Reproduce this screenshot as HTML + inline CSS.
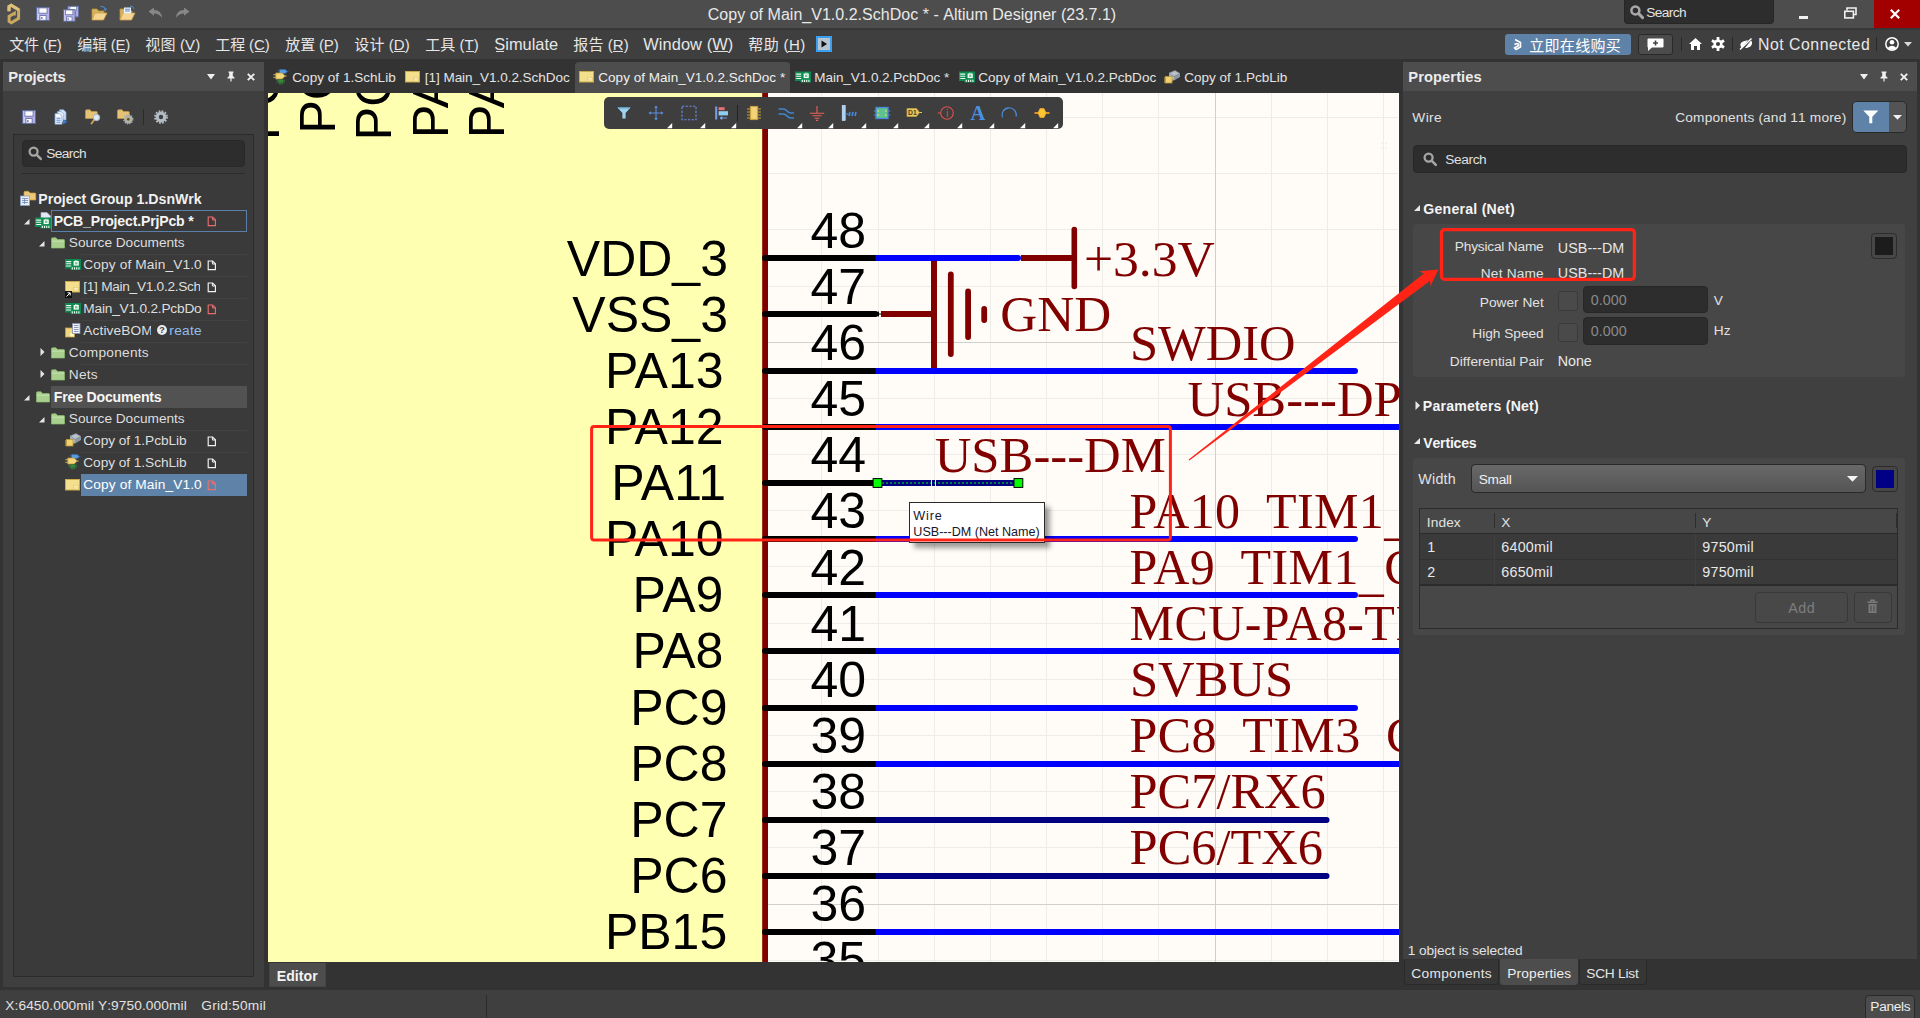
<!DOCTYPE html>
<html lang="zh-CN">
<head>
<meta charset="utf-8">
<title>Copy of Main_V1.0.2.SchDoc * - Altium Designer (23.7.1)</title>
<style>
html,body{margin:0;padding:0;background:#333;}
body{width:1920px;height:1018px;overflow:hidden;position:relative;
 font-family:"Liberation Sans","Noto Sans CJK SC",sans-serif;color:#dedede;font-size:13px;}
div,span.t,svg.i{position:absolute;box-sizing:border-box;}
span.t{white-space:nowrap;line-height:1;font-kerning:none;}
svg.i{overflow:visible;}
svg text{font-kerning:none;}
</style>
</head>
<body>
<div class="root" style="left:0px;top:0px;width:1920px;height:1018px;background:#333;overflow:hidden;">
<div class="titlebar" style="left:0px;top:0px;width:1920px;height:28px;background:#4d4d4d;">
<svg class="i" style="left:6px;top:3px;" width="16" height="22" viewBox="0 0 16 22"><path d="M3 8.2 V3.6 L5.2 2.3 L12.6 6.7 V15.3 L5.4 19.7 L3.1 18.3 V13.4 L8.3 10.3 V12.6" fill="none" stroke="#c9a85f" stroke-width="3" stroke-linejoin="miter"/><path d="M3 8.2 V3.6 L5.2 2.3 L12.6 6.7" fill="none" stroke="#dcc07c" stroke-width="3"/></svg>
<svg class="i" style="left:36px;top:7px;" width="14" height="14" viewBox="0 0 14 14"><g transform="translate(0,0) scale(1.0)"><rect x="0.5" y="0.5" width="13" height="13" fill="#b6b0ea" stroke="#5c6a9c" stroke-width="1"/><rect x="1.6" y="1" width="1.2" height="12" fill="#d8d4f6"/><rect x="2.9" y="0.9" width="8.2" height="5.3" fill="#fbfbfd" stroke="#5c6a9c" stroke-width="0.8"/><rect x="3.9" y="8.6" width="6.2" height="4.6" fill="#fbfbfd" stroke="#5c6a9c" stroke-width="0.8"/><rect x="5" y="10" width="1.6" height="2" fill="#8088b8"/></g></svg>
<svg class="i" style="left:63px;top:5px;" width="17" height="17" viewBox="0 0 17 17"><g transform="translate(4.5,0.8) scale(0.8214285714285714)"><rect x="0.5" y="0.5" width="13" height="13" fill="#b6b0ea" stroke="#5c6a9c" stroke-width="1"/><rect x="1.6" y="1" width="1.2" height="12" fill="#d8d4f6"/><rect x="2.9" y="0.9" width="8.2" height="5.3" fill="#fbfbfd" stroke="#5c6a9c" stroke-width="0.8"/><rect x="3.9" y="8.6" width="6.2" height="4.6" fill="#fbfbfd" stroke="#5c6a9c" stroke-width="0.8"/><rect x="5" y="10" width="1.6" height="2" fill="#8088b8"/></g><g transform="translate(0,4.2) scale(0.8928571428571429)"><rect x="0.5" y="0.5" width="13" height="13" fill="#b6b0ea" stroke="#5c6a9c" stroke-width="1"/><rect x="1.6" y="1" width="1.2" height="12" fill="#d8d4f6"/><rect x="2.9" y="0.9" width="8.2" height="5.3" fill="#fbfbfd" stroke="#5c6a9c" stroke-width="0.8"/><rect x="3.9" y="8.6" width="6.2" height="4.6" fill="#fbfbfd" stroke="#5c6a9c" stroke-width="0.8"/><rect x="5" y="10" width="1.6" height="2" fill="#8088b8"/></g></svg>
<svg class="i" style="left:91px;top:5px;" width="17" height="17" viewBox="0 0 17 17"><path d="M1 15 L1 4 L6 4 L7.5 6 L13 6 L13 8" fill="#d9b25e" stroke="#b8923e" stroke-width="0.8"/><path d="M1 15 L4 8 L16 8 L12.5 15 Z" fill="#f6d592" stroke="#c9a04a" stroke-width="0.8"/><path d="M9.5 1.5 Q13.5 1 14.5 5" fill="none" stroke="#4a8fd0" stroke-width="1.1"/><path d="M12.8 4 L14.6 6.2 L16 3.6 Z" fill="#4a8fd0"/></svg>
<svg class="i" style="left:119px;top:5px;" width="17" height="17" viewBox="0 0 17 17"><path d="M1 15 L1 4 L6 4 L7.5 6 L13 6 L13 8" fill="#d9b25e" stroke="#b8923e" stroke-width="0.8"/><path d="M1 15 L4 8 L16 8 L12.5 15 Z" fill="#f6d592" stroke="#c9a04a" stroke-width="0.8"/><rect x="5" y="2.5" width="7" height="6" fill="#f2f6fb"/><path d="M6 4.2h5M6 6h5" stroke="#5b8fd0" stroke-width="1"/><path d="M11 1 Q14.5 1 15 4" fill="none" stroke="#4a8fd0" stroke-width="1"/></svg>
<svg class="i" style="left:148px;top:7px;" width="15" height="12" viewBox="0 0 15 12"><path d="M0.5 4.5 L6 0.5 L6 3 Q13.5 3 14 11 Q11.5 6.5 6 6.5 L6 8.8 Z" fill="#878787"/></svg>
<svg class="i" style="left:175px;top:7px;" width="15" height="12" viewBox="0 0 15 12"><path d="M14.5 4.5 L9 0.5 L9 3 Q1.5 3 1 11 Q3.5 6.5 9 6.5 L9 8.8 Z" fill="#878787"/></svg>
<span class="t" id="t0" style="left:707.8px;top:6.86px;font-size:16px;letter-spacing:0.020px;color:#e8e8e8;">Copy of Main_V1.0.2.SchDoc * - Altium Designer (23.7.1)</span>
<div style="left:1624px;top:0px;width:150px;height:23.5px;background:#2d2d2d;border-radius:0 0 4px 4px;border:1px solid #262626;border-top:none;">
<svg class="i" style="left:5px;top:5px;" width="14" height="14" viewBox="0 0 14 14"><circle cx="5.4" cy="5.4" r="4" fill="none" stroke="#a8a8a8" stroke-width="2.5"/><path d="M8.6 8.6 L12.6 12.6" stroke="#a8a8a8" stroke-width="2.9" stroke-linecap="round"/></svg>
<span class="t" id="t1" style="left:21.3px;top:6.1px;font-size:13.7px;letter-spacing:-0.595px;color:#e4e4e4;">Search</span>
</div>
<div style="left:1799px;top:16px;width:9px;height:2.5px;background:#f0f0f0;"></div>
<svg class="i" style="left:1844px;top:7px;" width="13" height="12" viewBox="0 0 13 12"><path d="M3 3.5 V1 H12 V7.5 H9.5" fill="none" stroke="#f0f0f0" stroke-width="1.6"/><rect x="0.8" y="4.3" width="8.6" height="6.6" fill="none" stroke="#f0f0f0" stroke-width="1.6"/></svg>
<div style="left:1874px;top:0px;width:46px;height:28px;background:#a20000;">
<svg class="i" style="left:16px;top:9px;" width="10" height="10" viewBox="0 0 10 10"><path d="M0.8 0.8 L9.2 9.2 M9.2 0.8 L0.8 9.2" stroke="#fff" stroke-width="2.2"/></svg>
</div>
</div>
<div style="left:0px;top:28px;width:1920px;height:2px;background:#373737;"></div>
<div class="menubar" style="left:0px;top:30px;width:1920px;height:29px;background:#3f3f3f;">
<span class="t" id="t2" style="left:9.3px;top:7.4px;font-size:15px;letter-spacing:-0.186px;color:#e6e6e6;">文件 (F)</span>
<span class="t" id="t3" style="left:77.3px;top:7.4px;font-size:15px;letter-spacing:-0.254px;color:#e6e6e6;">编辑 (E)</span>
<span class="t" id="t4" style="left:145.3px;top:7.4px;font-size:15px;letter-spacing:0.146px;color:#e6e6e6;">视图 (V)</span>
<span class="t" id="t5" style="left:215.3px;top:7.4px;font-size:15px;letter-spacing:-0.120px;color:#e6e6e6;">工程 (C)</span>
<span class="t" id="t6" style="left:285.3px;top:7.4px;font-size:15px;letter-spacing:-0.154px;color:#e6e6e6;">放置 (P)</span>
<span class="t" id="t7" style="left:354.3px;top:7.4px;font-size:15px;letter-spacing:0.080px;color:#e6e6e6;">设计 (D)</span>
<span class="t" id="t8" style="left:425.3px;top:7.4px;font-size:15px;letter-spacing:0.014px;color:#e6e6e6;">工具 (T)</span>
<span class="t" id="t9" style="left:494.3px;top:6.22px;font-size:16.4px;letter-spacing:0.017px;color:#e6e6e6;">Simulate</span>
<span class="t" id="t10" style="left:573.3px;top:7.4px;font-size:15px;letter-spacing:0.080px;color:#e6e6e6;">报告 (R)</span>
<span class="t" id="t11" style="left:643.3px;top:6.22px;font-size:16.4px;letter-spacing:0.072px;color:#e6e6e6;">Window (W)</span>
<span class="t" id="t12" style="left:748.3px;top:7.4px;font-size:15px;letter-spacing:0.380px;color:#e6e6e6;">帮助 (H)</span>
<div style="left:48.5px;top:21px;width:7px;height:1px;background:#e0e0e0;"></div>
<div style="left:116.5px;top:21px;width:8px;height:1px;background:#e0e0e0;"></div>
<div style="left:185px;top:21px;width:9.5px;height:1px;background:#e0e0e0;"></div>
<div style="left:255px;top:21px;width:9.5px;height:1px;background:#e0e0e0;"></div>
<div style="left:324.5px;top:21px;width:8.5px;height:1px;background:#e0e0e0;"></div>
<div style="left:394px;top:21px;width:10.5px;height:1px;background:#e0e0e0;"></div>
<div style="left:466px;top:21px;width:7.5px;height:1px;background:#e0e0e0;"></div>
<div style="left:496px;top:21px;width:7.5px;height:1px;background:#e0e0e0;"></div>
<div style="left:613px;top:21px;width:9.5px;height:1px;background:#e0e0e0;"></div>
<div style="left:713px;top:21px;width:14.5px;height:1px;background:#e0e0e0;"></div>
<div style="left:787.5px;top:21px;width:12px;height:1px;background:#e0e0e0;"></div>
<svg class="i" style="left:816px;top:6px;" width="16" height="16" viewBox="0 0 16 16"><rect width="16" height="16" fill="#3aa0f0"/><rect x="2" y="2" width="12" height="12" fill="#b8c4d0"/><path d="M5.5 4.5 L11 8 L5.5 11.5 Z" fill="#111"/></svg>
<div style="left:1505px;top:4px;width:126px;height:21px;background:#5f83a8;border-radius:3px;">
<svg class="i" style="left:8px;top:4px;" width="10" height="13" viewBox="0 0 10 13"><path d="M2 1.5 L7.5 4.5 L7.5 9 L3 11.5 L1.5 10 L5.5 7.5 L5.5 6 L3.5 5.5 L1.5 6.5" fill="none" stroke="#fff" stroke-width="1.5"/></svg>
<span class="t" id="t13" style="left:24.3px;top:4px;font-size:15px;letter-spacing:0.277px;color:#ffffff;">立即在线购买</span>
</div>
<div style="left:1638px;top:4px;width:35px;height:21px;background:#4c4c4c;border:1px solid #2a2a2a;border-radius:3px;">
<svg class="i" style="left:8px;top:3px;" width="17" height="14" viewBox="0 0 17 14"><path d="M1.5 0.5 H15.5 Q16.5 0.5 16.5 1.5 V8.5 Q16.5 9.5 15.5 9.5 H5 L1 13 V9.5 Q0.5 9.5 0.5 8.5 V1.5 Q0.5 0.5 1.5 0.5 Z" fill="#fff"/><path d="M8.5 2.5 V7.5 M6 5 H11" stroke="#444" stroke-width="1.6"/></svg>
</div>
<div style="left:1681px;top:7px;width:1px;height:14px;background:#2a2a2a;"></div>
<svg class="i" style="left:1689px;top:8px;" width="13" height="12" viewBox="0 0 13 12"><path d="M6.5 0 L13 6 H11 V12 H8 V8 H5 V12 H2 V6 H0 Z" fill="#fff"/></svg>
<svg class="i" style="left:1711px;top:7px;" width="14" height="14" viewBox="0 0 14 14"><g fill="#fff"><circle cx="7" cy="7" r="4.6"/><rect x="5.6" y="0" width="2.8" height="14" transform="rotate(0 7 7)"/><rect x="5.6" y="0" width="2.8" height="14" transform="rotate(60 7 7)"/><rect x="5.6" y="0" width="2.8" height="14" transform="rotate(120 7 7)"/></g><circle cx="7" cy="7" r="2.1" fill="#3f3f3f"/></svg>
<div style="left:1732px;top:7px;width:1px;height:14px;background:#2a2a2a;"></div>
<svg class="i" style="left:1739px;top:8px;" width="14" height="12" viewBox="0 0 14 12"><path d="M2 9 Q0 5 4 3.5 L9 2 L3 10 Z M6 10 L12 2.5 Q14.5 5 11.5 8.5 L8 10 Z" fill="#fff"/><path d="M1 11.5 L12.5 0.5" stroke="#fff" stroke-width="1.5"/></svg>
<span class="t" id="t14" style="left:1758px;top:6.73px;font-size:15.8px;letter-spacing:0.526px;color:#e8e8e8;">Not Connected</span>
<div style="left:1876px;top:7px;width:1px;height:14px;background:#2a2a2a;"></div>
<svg class="i" style="left:1885px;top:7px;" width="14" height="14" viewBox="0 0 14 14"><circle cx="7" cy="7" r="6.2" fill="none" stroke="#fff" stroke-width="1.5"/><circle cx="7" cy="5.3" r="2.3" fill="#fff"/><path d="M2.6 11 Q7 6.5 11.4 11 Q7 14.5 2.6 11Z" fill="#fff"/></svg>
<svg class="i" style="left:1904px;top:12px;" width="8" height="5" viewBox="0 0 8 5"><path d="M0 0 H8 L4 4.5 Z" fill="#d8d8d8"/></svg>
</div>
<div class="panel-projects" style="left:3px;top:62px;width:261px;height:925px;background:#3f3f3f;">
<div style="left:0px;top:0px;width:261px;height:29px;background:#4d4d4d;">
<span class="t" id="t15" style="left:5.3px;top:8.06px;font-size:14.7px;letter-spacing:-0.081px;color:#ececec;font-weight:bold;">Projects</span>
<svg class="i" style="left:204px;top:12px;" width="8" height="6" viewBox="0 0 8 6"><path d="M0 0 H8 L4 5.5 Z" fill="#f0f0f0"/></svg>
<svg class="i" style="left:224px;top:9px;" width="8" height="11" viewBox="0 0 8 11"><path d="M1.5 0.5 H6.5 V1.8 H5.8 V5 L7.5 6.5 V7.4 H0.5 V6.5 L2.2 5 V1.8 H1.5 Z" fill="#f0f0f0"/><path d="M4 7 V10.5" stroke="#f0f0f0" stroke-width="1.2"/></svg>
<svg class="i" style="left:244px;top:11px;" width="8" height="8" viewBox="0 0 8 8"><path d="M0.8 0.8 L7.2 7.2 M7.2 0.8 L0.8 7.2" stroke="#f0f0f0" stroke-width="1.9"/></svg>
</div>
<svg class="i" style="left:19px;top:48px;" width="14" height="14" viewBox="0 0 14 14"><g transform="translate(0,0) scale(1.0)"><rect x="0.5" y="0.5" width="13" height="13" fill="#b6b0ea" stroke="#5c6a9c" stroke-width="1"/><rect x="1.6" y="1" width="1.2" height="12" fill="#d8d4f6"/><rect x="2.9" y="0.9" width="8.2" height="5.3" fill="#fbfbfd" stroke="#5c6a9c" stroke-width="0.8"/><rect x="3.9" y="8.6" width="6.2" height="4.6" fill="#fbfbfd" stroke="#5c6a9c" stroke-width="0.8"/><rect x="5" y="10" width="1.6" height="2" fill="#8088b8"/></g></svg>
<svg class="i" style="left:51px;top:47px;" width="15" height="16" viewBox="0 0 15 16"><path d="M5.5 0.8 H9.5 L12 3.3 V11 H5.5 Z" fill="#dfe9f7" stroke="#7a9fd4" stroke-width="0.8"/><path d="M3.3 2.6 H7.3 L9.8 5.1 V13 H3.3 Z" fill="#eaf1fb" stroke="#7a9fd4" stroke-width="0.8"/><path d="M1 4.6 H5.4 L8 7.2 V15.2 H1 Z" fill="#f8fbff" stroke="#7a9fd4" stroke-width="0.8"/><path d="M2.4 9.2h4.2M2.4 11.2h4.2M2.4 13.2h4.2" stroke="#4f86d0" stroke-width="1"/><path d="M9 10.5 L13.6 12.8 L9 15.4 Z" fill="#3a78c8"/></svg>
<svg class="i" style="left:82px;top:47px;" width="17" height="16" viewBox="0 0 17 16"><path d="M0.5 2 Q0.5 0.8 1.5 0.8 H5 L6.5 2.5 H11.5 Q12.3 2.5 12.3 3.3 V9.5 H0.5 Z" fill="#e7c276" stroke="#c29a44" stroke-width="0.7"/><path d="M9 11 L6.5 14.5" stroke="#caa050" stroke-width="2" stroke-linecap="round"/><circle cx="11.5" cy="8.5" r="3.2" fill="#dfe9f4" stroke="#9fb3c8" stroke-width="1"/></svg>
<svg class="i" style="left:114px;top:47px;" width="17" height="16" viewBox="0 0 17 16"><path d="M0.5 2 Q0.5 0.8 1.5 0.8 H5 L6.5 2.5 H11.5 Q12.3 2.5 12.3 3.3 V9.5 H0.5 Z" fill="#e7c276" stroke="#c29a44" stroke-width="0.7"/><circle cx="11.3" cy="10.3" r="3.1" fill="#50503e" stroke="#a9b2ba" stroke-width="2.2"/><circle cx="11.3" cy="10.3" r="4.5" fill="none" stroke="#a9b2ba" stroke-width="1.3" stroke-dasharray="1.25 1.106"/><circle cx="11.3" cy="10.3" r="1.9" fill="none" stroke="#e8c060" stroke-width="0.9"/></svg>
<div style="left:140px;top:47px;width:1px;height:16px;background:#2b2b2b;"></div>
<svg class="i" style="left:151px;top:48px;" width="14" height="14" viewBox="0 0 14 14"><circle cx="7" cy="7" r="3.8" fill="none" stroke="#b4bcc4" stroke-width="3.2"/><circle cx="7" cy="7" r="6" fill="none" stroke="#b4bcc4" stroke-width="1.8" stroke-dasharray="1.7 1.44"/></svg>
<div class="tree" style="left:10px;top:72px;width:241px;height:842.5px;background:#3a3a3a;border:1px solid #2b2b2b;">
<div style="left:8px;top:5px;width:223px;height:26.5px;background:#2d2d2d;border-radius:4px;border:1px solid #292929;">
<svg class="i" style="left:5px;top:5px;" width="15" height="15" viewBox="0 0 15 15"><circle cx="5.6" cy="5.6" r="4" fill="none" stroke="#a6a6a6" stroke-width="2.3"/><path d="M8.8 8.8 L12.8 12.8" stroke="#a6a6a6" stroke-width="2.6" stroke-linecap="round"/></svg>
<span class="t" id="t16" style="left:23.3px;top:5.9px;font-size:13.7px;letter-spacing:-0.595px;color:#e0e0e0;">Search</span>
</div>
<div style="left:8px;top:38px;width:223px;height:1px;background:#2b2b2b;"></div>
<div style="left:67px;top:119.3px;width:166px;height:1px;background:#424242;"></div>
<div style="left:67px;top:141.3px;width:166px;height:1px;background:#424242;"></div>
<div style="left:67px;top:163.3px;width:166px;height:1px;background:#424242;"></div>
<div style="left:67px;top:185.3px;width:166px;height:1px;background:#424242;"></div>
<div style="left:67px;top:207.3px;width:166px;height:1px;background:#424242;"></div>
<div style="left:67px;top:229.3px;width:166px;height:1px;background:#424242;"></div>
<div style="left:67px;top:295.3px;width:166px;height:1px;background:#424242;"></div>
<div style="left:67px;top:317.3px;width:166px;height:1px;background:#424242;"></div>
<svg class="i" style="left:6px;top:55px;" width="17" height="17" viewBox="0 0 17 17"><path transform="translate(3.5,0.5)" d="M0.5 2 Q0.5 0.8 1.5 0.8 H5 L6.5 2.5 H11.5 Q12.3 2.5 12.3 3.3 V9.5 H0.5 Z" fill="#efc777" stroke="#c79c40" stroke-width="0.7"/><rect x="0.5" y="6" width="9" height="9.5" fill="#e8eef8" stroke="#8da2c4" stroke-width="0.8"/><path d="M2 8.5h6M2 10.5h6M2 12.5h6M4.5 8v6" stroke="#6a86b4" stroke-width="0.8"/></svg>
<span class="t" id="t17" style="left:24.3px;top:56.56px;font-size:14.1px;letter-spacing:0.024px;color:#f0f0f0;font-weight:bold;">Project Group 1.DsnWrk</span>
<svg class="i" style="left:10px;top:84px;" width="6" height="6" viewBox="0 0 6 6"><path d="M5.5 0 V5.5 H0 Z" fill="#e6e6e6"/></svg>
<svg class="i" style="left:21px;top:77px;" width="17" height="17" viewBox="0 0 17 17"><path d="M6 0.5 H12 L15.5 4 V13 H6 Z" fill="#e4e8f4" stroke="#a8b0c8" stroke-width="0.7"/><g transform="translate(0,4.5)"><path d="M0 1 H16 V12 H5.5 V10.5 H0 Z" fill="#0d8a4f"/><path d="M1.6 3.6h4.6M1.6 5.8h4.6M1.6 8h4.6" stroke="#f2fbf5" stroke-width="1.1"/><path d="M0.8 3.6h1M0.8 5.8h1M0.8 8h1" stroke="#bfe8d0" stroke-width="1.1"/><rect x="8.6" y="3" width="5.2" height="4.6" fill="#f2fbf5"/><rect x="10" y="4.2" width="2.4" height="2.2" fill="#6fc79a"/><path d="M10.4 2.2v1M12 2.2v1" stroke="#f2fbf5" stroke-width="0.8"/><path d="M7.3 9.3v2.2M9.5 9.3v2.2M11.7 9.3v2.2M13.9 9.3v2.2" stroke="#f2fbf5" stroke-width="1.1"/></g></svg>
<div style="left:37px;top:75px;width:196px;height:22px;border:1px solid #5b7fa8;"></div>
<span class="t" id="t18" style="left:39.8px;top:78.56px;font-size:14.1px;letter-spacing:-0.181px;color:#f4f4f4;font-weight:bold;">PCB_Project.PrjPcb *</span>
<svg class="i" style="left:193px;top:81px;" width="9" height="11" viewBox="0 0 9 11"><path d="M1.2 1 H5.6 L8.4 3.8 V9.6 H1.2 Z" fill="none" stroke="#e86c6c" stroke-width="1.15"/><path d="M5.4 1 V4 H8.4" fill="none" stroke="#e86c6c" stroke-width="1"/></svg>
<svg class="i" style="left:25px;top:106px;" width="6" height="6" viewBox="0 0 6 6"><path d="M5.5 0 V5.5 H0 Z" fill="#e6e6e6"/></svg>
<svg class="i" style="left:37px;top:102px;" width="14" height="12" viewBox="0 0 14 12"><path d="M0.5 2 Q0.5 0.8 1.5 0.8 H5 L6.5 2.5 H12.5 Q13.5 2.5 13.5 3.3 V11 H0.5 Z" fill="#a9d08e" stroke="#8cbc70" stroke-width="0.7"/><path d="M0.8 4.2 H13.2" stroke="#c6e3b2" stroke-width="1"/></svg>
<span class="t" id="t19" style="left:54.8px;top:100.9px;font-size:13.7px;letter-spacing:-0.034px;">Source Documents</span>
<svg class="i" style="left:51px;top:123px;" width="16" height="13" viewBox="0 0 16 13"><path d="M0 1 H16 V12 H5.5 V10.5 H0 Z" fill="#0d8a4f"/><path d="M1.6 3.6h4.6M1.6 5.8h4.6M1.6 8h4.6" stroke="#f2fbf5" stroke-width="1.1"/><path d="M0.8 3.6h1M0.8 5.8h1M0.8 8h1" stroke="#bfe8d0" stroke-width="1.1"/><rect x="8.6" y="3" width="5.2" height="4.6" fill="#f2fbf5"/><rect x="10" y="4.2" width="2.4" height="2.2" fill="#6fc79a"/><path d="M10.4 2.2v1M12 2.2v1" stroke="#f2fbf5" stroke-width="0.8"/><path d="M7.3 9.3v2.2M9.5 9.3v2.2M11.7 9.3v2.2M13.9 9.3v2.2" stroke="#f2fbf5" stroke-width="1.1"/></svg>
<span class="t" id="t20" style="left:69.3px;top:122.9px;font-size:13.7px;letter-spacing:0.124px;">Copy of Main_V1.0</span>
<svg class="i" style="left:193px;top:125px;" width="9" height="11" viewBox="0 0 9 11"><path d="M1.2 1 H5.6 L8.4 3.8 V9.6 H1.2 Z" fill="none" stroke="#f2f2f2" stroke-width="1.15"/><path d="M5.4 1 V4 H8.4" fill="none" stroke="#f2f2f2" stroke-width="1"/></svg>
<svg class="i" style="left:51px;top:146px;" width="15" height="12" viewBox="0 0 15 12"><rect x="0.5" y="0.5" width="14" height="10.5" fill="#f3df8c" stroke="#c9aa4c" stroke-width="1"/><rect x="8" y="6" width="6" height="4.4" fill="#e8cf70"/><path d="M9 7.3h4M9 9h4" stroke="#fff8d8" stroke-width="0.9"/></svg>
<svg class="i" style="left:51px;top:156px;" width="7" height="7" viewBox="0 0 7 7"><rect width="7" height="7" fill="#111"/><path d="M1.5 5.5 L5 2 M2.5 1.8 H5.2 V4.5" stroke="#fff" stroke-width="1" fill="none"/></svg>
<span class="t" id="t21" style="left:69.3px;top:144.9px;font-size:13.7px;letter-spacing:-0.298px;width:117px;overflow:hidden;">[1] Main_V1.0.2.Sch</span>
<svg class="i" style="left:193px;top:147px;" width="9" height="11" viewBox="0 0 9 11"><path d="M1.2 1 H5.6 L8.4 3.8 V9.6 H1.2 Z" fill="none" stroke="#f2f2f2" stroke-width="1.15"/><path d="M5.4 1 V4 H8.4" fill="none" stroke="#f2f2f2" stroke-width="1"/></svg>
<svg class="i" style="left:51px;top:167px;" width="16" height="13" viewBox="0 0 16 13"><path d="M0 1 H16 V12 H5.5 V10.5 H0 Z" fill="#0d8a4f"/><path d="M1.6 3.6h4.6M1.6 5.8h4.6M1.6 8h4.6" stroke="#f2fbf5" stroke-width="1.1"/><path d="M0.8 3.6h1M0.8 5.8h1M0.8 8h1" stroke="#bfe8d0" stroke-width="1.1"/><rect x="8.6" y="3" width="5.2" height="4.6" fill="#f2fbf5"/><rect x="10" y="4.2" width="2.4" height="2.2" fill="#6fc79a"/><path d="M10.4 2.2v1M12 2.2v1" stroke="#f2fbf5" stroke-width="0.8"/><path d="M7.3 9.3v2.2M9.5 9.3v2.2M11.7 9.3v2.2M13.9 9.3v2.2" stroke="#f2fbf5" stroke-width="1.1"/></svg>
<span class="t" id="t22" style="left:69.3px;top:166.9px;font-size:13.7px;letter-spacing:-0.209px;">Main_V1.0.2.PcbDo</span>
<svg class="i" style="left:193px;top:169px;" width="9" height="11" viewBox="0 0 9 11"><path d="M1.2 1 H5.6 L8.4 3.8 V9.6 H1.2 Z" fill="none" stroke="#e86c6c" stroke-width="1.15"/><path d="M5.4 1 V4 H8.4" fill="none" stroke="#e86c6c" stroke-width="1"/></svg>
<svg class="i" style="left:51px;top:188px;" width="16" height="15" viewBox="0 0 16 15"><rect x="0.5" y="5" width="9" height="9" fill="#f0d880" stroke="#c0a044" stroke-width="0.8"/><rect x="5" y="10" width="4" height="3.5" fill="#fff4c0"/><rect x="7.5" y="0.5" width="7.5" height="10" fill="#f0f2f8" stroke="#8890a8" stroke-width="0.8"/><path d="M9 2.5h4.5M9 4.5h4.5M9 6.5h4.5M9 8.5h4.5" stroke="#7080a8" stroke-width="0.8"/></svg>
<span class="t" id="t23" style="left:69.3px;top:188.9px;font-size:13.7px;letter-spacing:0.118px;width:67.5px;overflow:hidden;">ActiveBOM</span>
<svg class="i" style="left:143px;top:190px;" width="10" height="10" viewBox="0 0 10 10"><circle cx="5" cy="5" r="5" fill="#ececec"/></svg>
<span class="t" id="t24" style="left:145.2px;top:190.98px;font-size:9px;color:#3a3a3a;font-weight:bold;">?</span>
<span class="t" id="t25" style="left:155.3px;top:188.9px;font-size:13.7px;letter-spacing:0.299px;color:#8fbfec;">reate</span>
<svg class="i" style="left:26px;top:213px;" width="5" height="8" viewBox="0 0 5 8"><path d="M0.5 0 L4.5 4 L0.5 8 Z" fill="#e6e6e6"/></svg>
<svg class="i" style="left:37px;top:212px;" width="14" height="12" viewBox="0 0 14 12"><path d="M0.5 2 Q0.5 0.8 1.5 0.8 H5 L6.5 2.5 H12.5 Q13.5 2.5 13.5 3.3 V11 H0.5 Z" fill="#a9d08e" stroke="#8cbc70" stroke-width="0.7"/><path d="M0.8 4.2 H13.2" stroke="#c6e3b2" stroke-width="1"/></svg>
<span class="t" id="t26" style="left:54.8px;top:210.9px;font-size:13.7px;letter-spacing:0.255px;">Components</span>
<svg class="i" style="left:26px;top:235px;" width="5" height="8" viewBox="0 0 5 8"><path d="M0.5 0 L4.5 4 L0.5 8 Z" fill="#e6e6e6"/></svg>
<svg class="i" style="left:37px;top:234px;" width="14" height="12" viewBox="0 0 14 12"><path d="M0.5 2 Q0.5 0.8 1.5 0.8 H5 L6.5 2.5 H12.5 Q13.5 2.5 13.5 3.3 V11 H0.5 Z" fill="#a9d08e" stroke="#8cbc70" stroke-width="0.7"/><path d="M0.8 4.2 H13.2" stroke="#c6e3b2" stroke-width="1"/></svg>
<span class="t" id="t27" style="left:54.8px;top:232.9px;font-size:13.7px;letter-spacing:0.248px;">Nets</span>
<div style="left:37px;top:251px;width:196px;height:22px;background:#525252;"></div>
<svg class="i" style="left:10px;top:260px;" width="6" height="6" viewBox="0 0 6 6"><path d="M5.5 0 V5.5 H0 Z" fill="#e6e6e6"/></svg>
<svg class="i" style="left:22px;top:256px;" width="14" height="12" viewBox="0 0 14 12"><path d="M0.5 2 Q0.5 0.8 1.5 0.8 H5 L6.5 2.5 H12.5 Q13.5 2.5 13.5 3.3 V11 H0.5 Z" fill="#a9d08e" stroke="#8cbc70" stroke-width="0.7"/><path d="M0.8 4.2 H13.2" stroke="#c6e3b2" stroke-width="1"/></svg>
<span class="t" id="t28" style="left:39.8px;top:254.56px;font-size:14.1px;letter-spacing:-0.195px;color:#f6f6f6;font-weight:bold;">Free Documents</span>
<svg class="i" style="left:25px;top:282px;" width="6" height="6" viewBox="0 0 6 6"><path d="M5.5 0 V5.5 H0 Z" fill="#e6e6e6"/></svg>
<svg class="i" style="left:37px;top:278px;" width="14" height="12" viewBox="0 0 14 12"><path d="M0.5 2 Q0.5 0.8 1.5 0.8 H5 L6.5 2.5 H12.5 Q13.5 2.5 13.5 3.3 V11 H0.5 Z" fill="#a9d08e" stroke="#8cbc70" stroke-width="0.7"/><path d="M0.8 4.2 H13.2" stroke="#c6e3b2" stroke-width="1"/></svg>
<span class="t" id="t29" style="left:54.8px;top:276.9px;font-size:13.7px;letter-spacing:-0.034px;">Source Documents</span>
<svg class="i" style="left:51px;top:298px;" width="17" height="14" viewBox="0 0 17 14"><path d="M5 3 L11 0.5 L16 3.5 L10 6.5 Z" fill="#b8c0c8" stroke="#7a848e" stroke-width="0.6"/><path d="M10 6.5 L16 3.5 V7 L10 10.5 Z" fill="#8e98a2"/><path d="M5 3 L10 6.5 V10.5 L5 7 Z" fill="#a4aeb8"/><rect x="1.5" y="6.5" width="6.5" height="6.5" fill="#f0d070" stroke="#b89a3c" stroke-width="0.8"/><path d="M0 8h1.5M0 10h1.5M0 12h1.5M8 8h1.5M8 10h1.5" stroke="#e8c860" stroke-width="0.9"/></svg>
<span class="t" id="t30" style="left:69.3px;top:298.9px;font-size:13.7px;letter-spacing:-0.057px;">Copy of 1.PcbLib</span>
<svg class="i" style="left:193px;top:301px;" width="9" height="11" viewBox="0 0 9 11"><path d="M1.2 1 H5.6 L8.4 3.8 V9.6 H1.2 Z" fill="none" stroke="#f2f2f2" stroke-width="1.15"/><path d="M5.4 1 V4 H8.4" fill="none" stroke="#f2f2f2" stroke-width="1"/></svg>
<svg class="i" style="left:51px;top:319px;" width="16" height="17" viewBox="0 0 16 17"><path d="M6.5 0.6 H12 L14.6 2.6 L12 4.6 H6.5 Z" fill="#5b9be0" stroke="#2f6db8" stroke-width="0.6"/><path d="M4.5 1.8h2M13.5 2.6h2" stroke="#2f6db8" stroke-width="0.8"/><path d="M2.8 4 H9.2 L12.2 7 L9.2 10 H2.8 Z" fill="#f3d77c" stroke="#b89a3c" stroke-width="0.8"/><path d="M0.3 5.7h2.5M0.3 8.3h2.5M12 7h1.6" stroke="#d8b850" stroke-width="0.9"/><rect x="5.3" y="10.6" width="5" height="3" fill="#2f8a3a"/><path d="M3.6 11.2h1.7M3.6 13h1.7M10.3 11.2h1.7M10.3 13h1.7M6.4 13.6v1.8M7.8 13.6v1.8M9.2 13.6v1.8" stroke="#3f9a48" stroke-width="0.7"/></svg>
<span class="t" id="t31" style="left:69.3px;top:320.9px;font-size:13.7px;letter-spacing:-0.057px;">Copy of 1.SchLib</span>
<svg class="i" style="left:193px;top:323px;" width="9" height="11" viewBox="0 0 9 11"><path d="M1.2 1 H5.6 L8.4 3.8 V9.6 H1.2 Z" fill="none" stroke="#f2f2f2" stroke-width="1.15"/><path d="M5.4 1 V4 H8.4" fill="none" stroke="#f2f2f2" stroke-width="1"/></svg>
<div style="left:67px;top:339px;width:166px;height:22px;background:#5f83a8;"></div>
<svg class="i" style="left:51px;top:344px;" width="15" height="12" viewBox="0 0 15 12"><rect x="0.5" y="0.5" width="14" height="10.5" fill="#f3df8c" stroke="#c9aa4c" stroke-width="1"/><rect x="8" y="6" width="6" height="4.4" fill="#e8cf70"/><path d="M9 7.3h4M9 9h4" stroke="#fff8d8" stroke-width="0.9"/></svg>
<span class="t" id="t32" style="left:69.3px;top:342.9px;font-size:13.7px;letter-spacing:0.124px;color:#ffffff;">Copy of Main_V1.0</span>
<svg class="i" style="left:193px;top:345px;" width="9" height="11" viewBox="0 0 9 11"><path d="M1.2 1 H5.6 L8.4 3.8 V9.6 H1.2 Z" fill="none" stroke="#ee6e6e" stroke-width="1.15"/><path d="M5.4 1 V4 H8.4" fill="none" stroke="#ee6e6e" stroke-width="1"/></svg>
</div>
</div>
<div class="doc-tabs" style="left:264px;top:62px;width:1139px;height:31px;background:#333;">
<div style="left:310.5px;top:0px;width:215px;height:31px;background:#4d4d4d;border-radius:4px 4px 0 0;"></div>
<svg class="i" style="left:9px;top:7px;" width="16" height="17" viewBox="0 0 16 17"><path d="M6.5 0.6 H12 L14.6 2.6 L12 4.6 H6.5 Z" fill="#5b9be0" stroke="#2f6db8" stroke-width="0.6"/><path d="M4.5 1.8h2M13.5 2.6h2" stroke="#2f6db8" stroke-width="0.8"/><path d="M2.8 4 H9.2 L12.2 7 L9.2 10 H2.8 Z" fill="#f3d77c" stroke="#b89a3c" stroke-width="0.8"/><path d="M0.3 5.7h2.5M0.3 8.3h2.5M12 7h1.6" stroke="#d8b850" stroke-width="0.9"/><rect x="5.3" y="10.6" width="5" height="3" fill="#2f8a3a"/><path d="M3.6 11.2h1.7M3.6 13h1.7M10.3 11.2h1.7M10.3 13h1.7M6.4 13.6v1.8M7.8 13.6v1.8M9.2 13.6v1.8" stroke="#3f9a48" stroke-width="0.7"/></svg>
<span class="t" id="t33" style="left:28.3px;top:9.27px;font-size:13.5px;letter-spacing:0.039px;color:#e4e4e4;">Copy of 1.SchLib</span>
<svg class="i" style="left:141px;top:8px;" width="15" height="13" viewBox="0 0 15 13"><g transform="translate(0,1)"><rect x="0.5" y="0.5" width="14" height="10.5" fill="#f3df8c" stroke="#c9aa4c" stroke-width="1"/><rect x="8" y="6" width="6" height="4.4" fill="#e8cf70"/><path d="M9 7.3h4M9 9h4" stroke="#fff8d8" stroke-width="0.9"/></g></svg>
<span class="t" id="t34" style="left:160.8px;top:9.27px;font-size:13.5px;letter-spacing:-0.033px;color:#e4e4e4;">[1] Main_V1.0.2.SchDoc</span>
<svg class="i" style="left:315px;top:8px;" width="15" height="13" viewBox="0 0 15 13"><g transform="translate(0,1)"><rect x="0.5" y="0.5" width="14" height="10.5" fill="#f3df8c" stroke="#c9aa4c" stroke-width="1"/><rect x="8" y="6" width="6" height="4.4" fill="#e8cf70"/><path d="M9 7.3h4M9 9h4" stroke="#fff8d8" stroke-width="0.9"/></g></svg>
<span class="t" id="t35" style="left:334.3px;top:9.27px;font-size:13.5px;letter-spacing:0.029px;color:#f0f0f0;">Copy of Main_V1.0.2.SchDoc *</span>
<svg class="i" style="left:531px;top:8px;" width="16" height="13" viewBox="0 0 16 13"><g transform="translate(0,0.5)"><path d="M0 1 H16 V12 H5.5 V10.5 H0 Z" fill="#0d8a4f"/><path d="M1.6 3.6h4.6M1.6 5.8h4.6M1.6 8h4.6" stroke="#f2fbf5" stroke-width="1.1"/><path d="M0.8 3.6h1M0.8 5.8h1M0.8 8h1" stroke="#bfe8d0" stroke-width="1.1"/><rect x="8.6" y="3" width="5.2" height="4.6" fill="#f2fbf5"/><rect x="10" y="4.2" width="2.4" height="2.2" fill="#6fc79a"/><path d="M10.4 2.2v1M12 2.2v1" stroke="#f2fbf5" stroke-width="0.8"/><path d="M7.3 9.3v2.2M9.5 9.3v2.2M11.7 9.3v2.2M13.9 9.3v2.2" stroke="#f2fbf5" stroke-width="1.1"/></g></svg>
<span class="t" id="t36" style="left:550.3px;top:9.27px;font-size:13.5px;letter-spacing:-0.049px;color:#e4e4e4;">Main_V1.0.2.PcbDoc *</span>
<svg class="i" style="left:695px;top:8px;" width="16" height="13" viewBox="0 0 16 13"><g transform="translate(0,0.5)"><path d="M0 1 H16 V12 H5.5 V10.5 H0 Z" fill="#0d8a4f"/><path d="M1.6 3.6h4.6M1.6 5.8h4.6M1.6 8h4.6" stroke="#f2fbf5" stroke-width="1.1"/><path d="M0.8 3.6h1M0.8 5.8h1M0.8 8h1" stroke="#bfe8d0" stroke-width="1.1"/><rect x="8.6" y="3" width="5.2" height="4.6" fill="#f2fbf5"/><rect x="10" y="4.2" width="2.4" height="2.2" fill="#6fc79a"/><path d="M10.4 2.2v1M12 2.2v1" stroke="#f2fbf5" stroke-width="0.8"/><path d="M7.3 9.3v2.2M9.5 9.3v2.2M11.7 9.3v2.2M13.9 9.3v2.2" stroke="#f2fbf5" stroke-width="1.1"/></g></svg>
<span class="t" id="t37" style="left:714.3px;top:9.27px;font-size:13.5px;letter-spacing:0.032px;color:#e4e4e4;">Copy of Main_V1.0.2.PcbDoc</span>
<svg class="i" style="left:900px;top:8px;" width="17" height="14" viewBox="0 0 17 14"><path d="M5 3 L11 0.5 L16 3.5 L10 6.5 Z" fill="#b8c0c8" stroke="#7a848e" stroke-width="0.6"/><path d="M10 6.5 L16 3.5 V7 L10 10.5 Z" fill="#8e98a2"/><path d="M5 3 L10 6.5 V10.5 L5 7 Z" fill="#a4aeb8"/><rect x="1.5" y="6.5" width="6.5" height="6.5" fill="#f0d070" stroke="#b89a3c" stroke-width="0.8"/><path d="M0 8h1.5M0 10h1.5M0 12h1.5M8 8h1.5M8 10h1.5" stroke="#e8c860" stroke-width="0.9"/></svg>
<span class="t" id="t38" style="left:920.3px;top:9.27px;font-size:13.5px;letter-spacing:0.006px;color:#e4e4e4;">Copy of 1.PcbLib</span>
</div>
<div class="sheet" style="left:268px;top:93px;width:1131px;height:869px;overflow:hidden;background:#fffcf8;">
<svg class="i" style="left:0px;top:0px;overflow:hidden;" width="1131" height="869" viewBox="268 93 1131 869"><rect x="268" y="93" width="1130" height="869" fill="#fffcf8"/>
<path d="M821.5 93V962 M878.5 93V962 M934.5 93V962 M990.5 93V962 M1046.5 93V962 M1102.5 93V962 M1158.5 93V962 M1271.5 93V962 M1327.5 93V962 M1383.5 93V962 M768 117.5H1398 M768 173.5H1398 M768 229.5H1398 M768 286.5H1398 M768 398.5H1398 M768 454.5H1398 M768 510.5H1398 M768 566.5H1398 M768 623.5H1398 M768 679.5H1398 M768 735.5H1398 M768 791.5H1398 M768 847.5H1398 M768 960.5H1398" stroke="#ecede8" stroke-width="1" fill="none"/>
<path d="M1215.5 93V962 M768 342.5H1398 M768 904.5H1398" stroke="#cfcfcc" stroke-width="1" fill="none"/>
<path d="M1381.5 143.5h1M1385.5 143.5h1M1381.5 147.5h1M1385.5 147.5h1" stroke="#dbe6f6" stroke-width="1.6" fill="none"/>
<rect x="1398" y="93" width="1" height="869" fill="#ffffff"/>
<rect x="268" y="93" width="497" height="869" fill="#ffffb2"/>
<rect x="762.2" y="93" width="5.8" height="869" fill="#800000"/>
<text transform="translate(279,139.89999999999998) rotate(-90)" font-family="'Liberation Sans',sans-serif" font-size="50" fill="#000" style="font-kerning:normal">PC</text>
<text transform="translate(335,133.5) rotate(-90)" font-family="'Liberation Sans',sans-serif" font-size="50" fill="#000" style="font-kerning:normal">PC</text>
<text transform="translate(391,140.2) rotate(-90)" font-family="'Liberation Sans',sans-serif" font-size="50" fill="#000" style="font-kerning:normal">PC</text>
<text transform="translate(448.2,138.0) rotate(-90)" font-family="'Liberation Sans',sans-serif" font-size="50" fill="#000" style="font-kerning:normal">PA</text>
<text transform="translate(504,138.0) rotate(-90)" font-family="'Liberation Sans',sans-serif" font-size="50" fill="#000" style="font-kerning:normal">PA</text>
<text x="566.8" y="275.9" font-family="'Liberation Sans',sans-serif" font-size="50" fill="#000" style="font-kerning:normal">VDD_3</text>
<text x="866.2" y="248.0" text-anchor="end" font-family="'Liberation Sans',sans-serif" font-size="50" fill="#000">48</text>
<text x="572.3" y="332.0" font-family="'Liberation Sans',sans-serif" font-size="50" fill="#000" style="font-kerning:normal">VSS_3</text>
<text x="866.2" y="304.1" text-anchor="end" font-family="'Liberation Sans',sans-serif" font-size="50" fill="#000">47</text>
<text x="604.9" y="388.0" font-family="'Liberation Sans',sans-serif" font-size="50" fill="#000" style="font-kerning:normal">PA13</text>
<text x="866.2" y="360.2" text-anchor="end" font-family="'Liberation Sans',sans-serif" font-size="50" fill="#000">46</text>
<text x="604.9" y="444.1" font-family="'Liberation Sans',sans-serif" font-size="50" fill="#000" style="font-kerning:normal">PA12</text>
<text x="866.2" y="416.2" text-anchor="end" font-family="'Liberation Sans',sans-serif" font-size="50" fill="#000">45</text>
<text x="611.2" y="500.2" font-family="'Liberation Sans',sans-serif" font-size="50" fill="#000" style="font-kerning:normal">PA11</text>
<text x="866.2" y="472.3" text-anchor="end" font-family="'Liberation Sans',sans-serif" font-size="50" fill="#000">44</text>
<text x="604.9" y="556.2" font-family="'Liberation Sans',sans-serif" font-size="50" fill="#000" style="font-kerning:normal">PA10</text>
<text x="866.2" y="528.4" text-anchor="end" font-family="'Liberation Sans',sans-serif" font-size="50" fill="#000">43</text>
<text x="632.5" y="612.3" font-family="'Liberation Sans',sans-serif" font-size="50" fill="#000" style="font-kerning:normal">PA9</text>
<text x="866.2" y="584.5" text-anchor="end" font-family="'Liberation Sans',sans-serif" font-size="50" fill="#000">42</text>
<text x="632.5" y="668.4" font-family="'Liberation Sans',sans-serif" font-size="50" fill="#000" style="font-kerning:normal">PA8</text>
<text x="866.2" y="640.6" text-anchor="end" font-family="'Liberation Sans',sans-serif" font-size="50" fill="#000">41</text>
<text x="630.2" y="724.5" font-family="'Liberation Sans',sans-serif" font-size="50" fill="#000" style="font-kerning:normal">PC9</text>
<text x="866.2" y="696.6" text-anchor="end" font-family="'Liberation Sans',sans-serif" font-size="50" fill="#000">40</text>
<text x="630.2" y="780.5" font-family="'Liberation Sans',sans-serif" font-size="50" fill="#000" style="font-kerning:normal">PC8</text>
<text x="866.2" y="752.7" text-anchor="end" font-family="'Liberation Sans',sans-serif" font-size="50" fill="#000">39</text>
<text x="630.2" y="836.6" font-family="'Liberation Sans',sans-serif" font-size="50" fill="#000" style="font-kerning:normal">PC7</text>
<text x="866.2" y="808.8" text-anchor="end" font-family="'Liberation Sans',sans-serif" font-size="50" fill="#000">38</text>
<text x="630.2" y="892.7" font-family="'Liberation Sans',sans-serif" font-size="50" fill="#000" style="font-kerning:normal">PC6</text>
<text x="866.2" y="864.9" text-anchor="end" font-family="'Liberation Sans',sans-serif" font-size="50" fill="#000">37</text>
<text x="604.9" y="948.7" font-family="'Liberation Sans',sans-serif" font-size="50" fill="#000" style="font-kerning:normal">PB15</text>
<text x="866.2" y="921.0" text-anchor="end" font-family="'Liberation Sans',sans-serif" font-size="50" fill="#000">36</text>
<text x="866.2" y="977.0" text-anchor="end" font-family="'Liberation Sans',sans-serif" font-size="50" fill="#000">35</text>
<text x="1083.9" y="275.6" font-family="'Liberation Serif',serif" font-size="50" fill="#800000" textLength="131" lengthAdjust="spacingAndGlyphs" style="font-kerning:normal">+3.3V</text>
<text x="1000.2" y="331.0" font-family="'Liberation Serif',serif" font-size="50" fill="#800000" textLength="111" lengthAdjust="spacingAndGlyphs" style="font-kerning:normal">GND</text>
<text x="1129.9" y="359.6" font-family="'Liberation Serif',serif" font-size="50" fill="#800000" textLength="165.6" lengthAdjust="spacingAndGlyphs" style="font-kerning:normal">SWDIO</text>
<text x="1187.5" y="415.6" font-family="'Liberation Serif',serif" font-size="50" fill="#800000" textLength="214.3" lengthAdjust="spacingAndGlyphs" style="font-kerning:normal">USB---DP</text>
<text x="934.7" y="471.6" font-family="'Liberation Serif',serif" font-size="50" fill="#800000" textLength="231.2" lengthAdjust="spacingAndGlyphs" style="font-kerning:normal">USB---DM</text>
<text x="1129.6" y="527.6" font-family="'Liberation Serif',serif" font-size="50" fill="#800000" style="font-kerning:normal;letter-spacing:0.4px">PA10<tspan dy="6">_</tspan><tspan dy="-6">TIM1</tspan><tspan dy="6">_</tspan><tspan dy="-6"></tspan></text>
<text x="1129.6" y="583.6" font-family="'Liberation Serif',serif" font-size="50" fill="#800000" style="font-kerning:normal;letter-spacing:0.4px">PA9<tspan dy="6">_</tspan><tspan dy="-6">TIM1</tspan><tspan dy="6">_</tspan><tspan dy="-6">C</tspan></text>
<text x="1129.6" y="639.6" font-family="'Liberation Serif',serif" font-size="50" fill="#800000" style="font-kerning:normal;letter-spacing:0.4px">MCU-PA8-TI</text>
<text x="1129.9" y="695.6" font-family="'Liberation Serif',serif" font-size="50" fill="#800000" textLength="163.4" lengthAdjust="spacingAndGlyphs" style="font-kerning:normal">SVBUS</text>
<text x="1129.6" y="751.6" font-family="'Liberation Serif',serif" font-size="50" fill="#800000" style="font-kerning:normal;letter-spacing:0.4px">PC8<tspan dy="6">_</tspan><tspan dy="-6">TIM3</tspan><tspan dy="6">_</tspan><tspan dy="-6">C</tspan></text>
<text x="1129.6" y="807.6" font-family="'Liberation Serif',serif" font-size="50" fill="#800000" textLength="196" lengthAdjust="spacingAndGlyphs" style="font-kerning:normal">PC7/RX6</text>
<text x="1129.6" y="863.6" font-family="'Liberation Serif',serif" font-size="50" fill="#800000" textLength="193.4" lengthAdjust="spacingAndGlyphs" style="font-kerning:normal">PC6/TX6</text>
<path d="M765 258.0H875.5 M765 314.0H875.5 M765 371.0H875.5 M765 427.0H875.5 M765 483.0H875.5 M765 539.0H875.5 M765 595.0H875.5 M765 651.0H875.5 M765 708.0H875.5 M765 764.0H875.5 M765 820.0H875.5 M765 876.0H875.5 M765 932.0H875.5" stroke="#000" stroke-width="6" stroke-linecap="round" fill="none"/>
<path d="M877 258.0H1018 M877 371.0H1355 M877 427.0H1420 M877 539.0H1355 M877 595.0H1355 M877 651.0H1420 M877 708.0H1355 M877 764.0H1420 M877 932.0H1420" stroke="#0000ff" stroke-width="6" stroke-linecap="round" fill="none"/>
<path d="M877 820.0H1326.5 M877 876.0H1326.5" stroke="#000080" stroke-width="6" stroke-linecap="round" fill="none"/>
<path d="M870 258.0H875.4 M870 314.0H875.4 M870 371.0H875.4 M870 427.0H875.4 M870 483.0H875.4 M870 539.0H875.4 M870 595.0H875.4 M870 651.0H875.4 M870 708.0H875.4 M870 764.0H875.4 M870 820.0H875.4 M870 876.0H875.4 M870 932.0H875.4" stroke="#000" stroke-width="6" fill="none"/>
<path d="M1021 258H1074" stroke="#800000" stroke-width="6" fill="none"/>
<path d="M1074.3 229.5V286.5" stroke="#800000" stroke-width="5.6" stroke-linecap="round" fill="none"/>
<path d="M881 314.0H934" stroke="#800000" stroke-width="6" fill="none"/>
<path d="M934 261V368.0" stroke="#800000" stroke-width="6" fill="none"/>
<path d="M950.8 274.5V354 M968.1 291.5V337 M984.2 309V320" stroke="#800000" stroke-width="5.8" stroke-linecap="round" fill="none"/>
<path d="M876 314.0h5 M878.5 311.5v5" stroke="#000" stroke-width="1" fill="none"/>
<path d="M877.5 483.0H1018.4" stroke="#000080" stroke-width="6" fill="none"/>
<path d="M882 483.0H1014" stroke="#00ff00" stroke-width="1" stroke-dasharray="2 2" fill="none"/>
<path d="M931.5 480.0v6 M935.5 480.0v6" stroke="#fffcf8" stroke-width="0.9" fill="none"/>
<rect x="873.1" y="478.6" width="8.8" height="8.8" fill="#00ff00" stroke="#000" stroke-width="1"/>
<rect x="1014.0" y="478.6" width="8.8" height="8.8" fill="#00ff00" stroke="#000" stroke-width="1"/></svg>
<div class="activebar" style="left:336.4px;top:4px;width:458.4px;height:31.8px;background:#3e3e3e;border-radius:5px;">
<svg class="i" style="left:10px;top:5.8px;" width="20" height="20" viewBox="0 0 20 20"><path d="M3.5 4.5 H16.5 L11.6 10 V15.5 H8.4 V10 Z" fill="#9fd2ee"/><path d="M3.5 4.5 H16.5 L15.4 5.8 H4.6 Z" fill="#6fb0d8"/></svg>
<svg class="i" style="left:42.1px;top:5.8px;" width="20" height="20" viewBox="0 0 20 20"><path d="M10 3.5V16.5M3.5 10H16.5" stroke="#5b8ee0" stroke-width="1.1"/><path d="M10 2.5l-1.8 2.4h3.6zM10 17.5l-1.8-2.4h3.6zM2.5 10l2.4-1.8v3.6zM17.5 10l-2.4-1.8v3.6z" fill="#5b8ee0"/></svg>
<svg class="i" style="left:62.9px;top:25.8px;" width="5.2" height="5.2" viewBox="0 0 5.2 5.2"><path d="M5.2 0 V5.2 H0 Z" fill="#fff"/></svg>
<svg class="i" style="left:74.6px;top:5.8px;" width="20" height="20" viewBox="0 0 20 20"><rect x="3" y="3.3" width="14" height="13.4" fill="none" stroke="#6a8ff0" stroke-width="1.1" stroke-dasharray="2.2 1.5"/></svg>
<svg class="i" style="left:95.4px;top:25.8px;" width="5.2" height="5.2" viewBox="0 0 5.2 5.2"><path d="M5.2 0 V5.2 H0 Z" fill="#fff"/></svg>
<svg class="i" style="left:106.2px;top:5.8px;" width="20" height="20" viewBox="0 0 20 20"><rect x="4.2" y="3.5" width="2" height="13" fill="#7aa0e8"/><rect x="7.6" y="4.2" width="6" height="3" fill="#e87078"/><rect x="7.6" y="8.2" width="9.4" height="4.2" fill="#8fd0f0"/><path d="M9 15h7M9 15l2-1.4v2.8z" stroke="#7aa0e8" stroke-width="0.9" fill="#7aa0e8"/></svg>
<svg class="i" style="left:127px;top:25.8px;" width="5.2" height="5.2" viewBox="0 0 5.2 5.2"><path d="M5.2 0 V5.2 H0 Z" fill="#fff"/></svg>
<div style="left:132.8px;top:8px;width:1px;height:16px;background:#222;"></div>
<svg class="i" style="left:139.6px;top:5.8px;" width="20" height="20" viewBox="0 0 20 20"><rect x="6.5" y="3.5" width="7" height="13" fill="#f4d278" stroke="#c9a040" stroke-width="1.2"/><path d="M3 6h3M3 9h3M3 12h3M3 15h3M14 6h3M14 9h3M14 12h3M14 15h3" stroke="#c9a040" stroke-width="1"/></svg>
<svg class="i" style="left:171.5px;top:5.8px;" width="20" height="20" viewBox="0 0 20 20"><path d="M2.5 6 H7 Q9.5 6 11 8 Q12.5 10 15 10 H18" fill="none" stroke="#3f86d0" stroke-width="1.5"/><path d="M2.5 11 H7 Q9.5 11 11 13 Q12.5 15 15 15 H18" fill="none" stroke="#3f86d0" stroke-width="1.5"/></svg>
<svg class="i" style="left:192.3px;top:25.8px;" width="5.2" height="5.2" viewBox="0 0 5.2 5.2"><path d="M5.2 0 V5.2 H0 Z" fill="#fff"/></svg>
<svg class="i" style="left:203.1px;top:5.8px;" width="20" height="20" viewBox="0 0 20 20"><path d="M10 3V10M2.8 10.3H17.2M5.5 12.8H14.5M7.6 15.2H12.4M9 17.4H11" stroke="#e8625a" stroke-width="1.1" fill="none"/></svg>
<svg class="i" style="left:223.9px;top:25.8px;" width="5.2" height="5.2" viewBox="0 0 5.2 5.2"><path d="M5.2 0 V5.2 H0 Z" fill="#fff"/></svg>
<svg class="i" style="left:235.6px;top:5.8px;" width="20" height="20" viewBox="0 0 20 20"><rect x="2.2" y="2.5" width="3" height="15" fill="#a8d0f8" stroke="#d8ecff" stroke-width="0.6"/><path d="M5.5 11h3" stroke="#4a88e0" stroke-width="1.2"/><path d="M10 9l-1 4M13 9l-1 4M16 9l-1 4" stroke="#4a88e0" stroke-width="1.6"/></svg>
<svg class="i" style="left:256.4px;top:25.8px;" width="5.2" height="5.2" viewBox="0 0 5.2 5.2"><path d="M5.2 0 V5.2 H0 Z" fill="#fff"/></svg>
<svg class="i" style="left:267.5px;top:5.8px;" width="20" height="20" viewBox="0 0 20 20"><rect x="4" y="4.5" width="12" height="11" fill="#5fc090" stroke="#4a88e0" stroke-width="1.3"/><path d="M1.8 8h2.5M1.8 12h2.5M15.8 8h2.5M15.8 12h2.5" stroke="#4a88e0" stroke-width="1"/><path d="M5.5 7l2 1-2 1zM5.5 11l2 1-2 1zM14.5 7l-2 1 2 1zM14.5 11l-2 1 2 1z" fill="#f8e060"/></svg>
<svg class="i" style="left:288.3px;top:25.8px;" width="5.2" height="5.2" viewBox="0 0 5.2 5.2"><path d="M5.2 0 V5.2 H0 Z" fill="#fff"/></svg>
<svg class="i" style="left:299.3px;top:5.8px;" width="20" height="20" viewBox="0 0 20 20"><path d="M3 5.5 H12.5 L15.5 9.5 L12.5 13.5 H3 Z" fill="#e8c860" stroke="#c0a040" stroke-width="0.8"/><path d="M15.5 9.5H18" stroke="#e8c860" stroke-width="1"/><text x="4" y="12.3" font-family="'Liberation Sans',sans-serif" font-weight="bold" font-size="6.8" fill="#4a4020">D1</text></svg>
<svg class="i" style="left:320.1px;top:25.8px;" width="5.2" height="5.2" viewBox="0 0 5.2 5.2"><path d="M5.2 0 V5.2 H0 Z" fill="#fff"/></svg>
<svg class="i" style="left:331.6px;top:5.8px;" width="20" height="20" viewBox="0 0 20 20"><circle cx="11" cy="10" r="6.3" fill="none" stroke="#e0524e" stroke-width="1.1"/><path d="M1.8 10H4.8" stroke="#e0524e" stroke-width="1.1"/><text x="9.9" y="13.6" font-family="'Liberation Sans',sans-serif" font-size="10" fill="#e0524e">i</text></svg>
<svg class="i" style="left:352.4px;top:25.8px;" width="5.2" height="5.2" viewBox="0 0 5.2 5.2"><path d="M5.2 0 V5.2 H0 Z" fill="#fff"/></svg>
<svg class="i" style="left:363.6px;top:5.8px;" width="20" height="20" viewBox="0 0 20 20"><text x="2.6" y="17.3" font-family="'Liberation Serif',serif" font-weight="bold" font-size="20.5" fill="#4a90e2">A</text></svg>
<svg class="i" style="left:384.4px;top:25.8px;" width="5.2" height="5.2" viewBox="0 0 5.2 5.2"><path d="M5.2 0 V5.2 H0 Z" fill="#fff"/></svg>
<svg class="i" style="left:395px;top:5.8px;" width="20" height="20" viewBox="0 0 20 20"><path d="M3.4 14.5 A7.2 7.2 0 1 1 17.2 13.5" fill="none" stroke="#4a90e2" stroke-width="1.1"/></svg>
<svg class="i" style="left:415.8px;top:25.8px;" width="5.2" height="5.2" viewBox="0 0 5.2 5.2"><path d="M5.2 0 V5.2 H0 Z" fill="#fff"/></svg>
<svg class="i" style="left:427.5px;top:5.8px;" width="20" height="20" viewBox="0 0 20 20"><path d="M2.5 10H17.5" stroke="#f0a020" stroke-width="1.8"/><path d="M6 10 L8 5.6 H12 L14 10 L12 14.4 H8 Z" fill="#fbc432" stroke="#f0a828" stroke-width="0.8"/></svg>
<svg class="i" style="left:448.3px;top:25.8px;" width="5.2" height="5.2" viewBox="0 0 5.2 5.2"><path d="M5.2 0 V5.2 H0 Z" fill="#fff"/></svg>
</div>
<div class="tooltip" style="left:641px;top:409px;width:135.6px;height:41.3px;background:#fff;border:1px solid #2a2a2a;box-shadow:5px 5px 5px rgba(0,0,0,.38);">
<span class="t" id="t39" style="left:3.3px;top:7.03px;font-size:12.6px;letter-spacing:0.836px;color:#16162a;">Wire</span>
<span class="t" id="t40" style="left:3.3px;top:23.23px;font-size:12.6px;letter-spacing:-0.013px;color:#16162a;">USB---DM (Net Name)</span>
</div>
</div>
<div class="editor-tab" style="left:268.6px;top:962.5px;width:57px;height:24.5px;background:#4d4d4d;box-shadow:inset 0 -1px 0 #454545,inset 1px 0 0 #454545,inset -1px 0 0 #454545;">
<span class="t" id="t41" style="left:8.2px;top:6.96px;font-size:14.1px;letter-spacing:0.036px;color:#f4f4f4;font-weight:bold;">Editor</span>
</div>
<div class="panel-properties" style="left:1403px;top:62px;width:514px;height:897px;background:#404040;">
<div style="left:0px;top:0px;width:514px;height:29px;background:#4d4d4d;">
<span class="t" id="t42" style="left:5.3px;top:8.06px;font-size:14.7px;letter-spacing:0.083px;color:#ececec;font-weight:bold;">Properties</span>
<svg class="i" style="left:457px;top:12px;" width="8" height="6" viewBox="0 0 8 6"><path d="M0 0 H8 L4 5.5 Z" fill="#f0f0f0"/></svg>
<svg class="i" style="left:477px;top:9px;" width="8" height="11" viewBox="0 0 8 11"><path d="M1.5 0.5 H6.5 V1.8 H5.8 V5 L7.5 6.5 V7.4 H0.5 V6.5 L2.2 5 V1.8 H1.5 Z" fill="#f0f0f0"/><path d="M4 7 V10.5" stroke="#f0f0f0" stroke-width="1.2"/></svg>
<svg class="i" style="left:497px;top:11px;" width="8" height="8" viewBox="0 0 8 8"><path d="M0.8 0.8 L7.2 7.2 M7.2 0.8 L0.8 7.2" stroke="#f0f0f0" stroke-width="1.9"/></svg>
</div>
<span class="t" id="t43" style="left:9.3px;top:49.1px;font-size:13.7px;letter-spacing:0.420px;color:#e2e2e2;">Wire</span>
<span class="t" id="t44" style="left:272.3px;top:49.1px;font-size:13.7px;letter-spacing:0.153px;color:#e2e2e2;">Components (and 11 more)</span>
<div style="left:449.2px;top:38.8px;width:54.8px;height:32.6px;background:#545454;border:1px solid #2a2a2a;border-radius:5px;overflow:hidden;">
<div style="left:-0.2px;top:-0.3px;width:35.5px;height:31px;background:#5f83a8;"></div>
<svg class="i" style="left:9.8px;top:8.7px;" width="16" height="14" viewBox="0 0 16 14"><path d="M0.3 0.5 H15.3 L9.3 6.8 V13.2 H6.3 V6.8 Z" fill="#fff"/></svg>
<svg class="i" style="left:39.8px;top:13.2px;" width="9" height="5" viewBox="0 0 9 5"><path d="M0 0 H9 L4.5 4.8 Z" fill="#f0f0f0"/></svg>
</div>
<div style="left:10px;top:83.3px;width:494px;height:27.4px;background:#2d2d2d;border:1px solid #272727;border-radius:4px;">
<svg class="i" style="left:9px;top:5.7px;" width="15" height="15" viewBox="0 0 15 15"><circle cx="5.6" cy="5.6" r="4" fill="none" stroke="#a6a6a6" stroke-width="2.3"/><path d="M8.8 8.8 L12.8 12.8" stroke="#a6a6a6" stroke-width="2.6" stroke-linecap="round"/></svg>
<span class="t" id="t45" style="left:31.3px;top:6.4px;font-size:13.7px;letter-spacing:-0.395px;color:#e0e0e0;">Search</span>
</div>
<svg class="i" style="left:10.5px;top:142.5px;" width="6" height="6" viewBox="0 0 6 6"><path d="M6 0 V6 H0 Z" fill="#e8e8e8"/></svg>
<span class="t" id="t46" style="left:20.3px;top:139.96px;font-size:14.1px;letter-spacing:0.242px;color:#f4f4f4;font-weight:bold;">General (Net)</span>
<div style="left:10px;top:162px;width:492px;height:153px;background:#474747;border-radius:4px;">
<span class="t" id="t47" style="left:41.8px;top:15.7px;font-size:13.7px;letter-spacing:-0.198px;color:#e2e2e2;">Physical Name</span>
<span class="t" id="t48" style="left:144.8px;top:17px;font-size:14.3px;letter-spacing:0.068px;color:#e8e8e8;">USB---DM</span>
<span class="t" id="t49" style="left:67.8px;top:42.5px;font-size:13.7px;letter-spacing:0.182px;color:#e2e2e2;">Net Name</span>
<span class="t" id="t50" style="left:144.8px;top:42px;font-size:14.3px;letter-spacing:0.068px;color:#e8e8e8;">USB---DM</span>
<span class="t" id="t51" style="left:66.8px;top:71.6px;font-size:13.7px;color:#e2e2e2;">Power Net</span>
<div style="left:145.3px;top:67px;width:19.4px;height:19.5px;background:#4a4a4a;border:1px solid #3a3a3a;border-radius:3px;"></div>
<div style="left:170px;top:62px;width:125px;height:27px;background:#2d2d2d;border:1px solid #272727;border-radius:4px;"></div>
<span class="t" id="t52" style="left:177.8px;top:69px;font-size:14.3px;letter-spacing:0.030px;color:#8a8a8a;">0.000</span>
<span class="t" id="t53" style="left:300.8px;top:69.9px;font-size:13.7px;color:#e2e2e2;">V</span>
<span class="t" id="t54" style="left:59.3px;top:102.7px;font-size:13.7px;letter-spacing:-0.016px;color:#e2e2e2;">High Speed</span>
<div style="left:145.3px;top:98.6px;width:19.4px;height:19.5px;background:#4a4a4a;border:1px solid #3a3a3a;border-radius:3px;"></div>
<div style="left:170px;top:93.4px;width:125px;height:27.2px;background:#2d2d2d;border:1px solid #272727;border-radius:4px;"></div>
<span class="t" id="t55" style="left:177.8px;top:100.4px;font-size:14.3px;letter-spacing:0.030px;color:#8a8a8a;">0.000</span>
<span class="t" id="t56" style="left:300.8px;top:100.1px;font-size:13.7px;letter-spacing:0.166px;color:#e2e2e2;">Hz</span>
<span class="t" id="t57" style="left:36.8px;top:130.9px;font-size:13.7px;letter-spacing:0.020px;color:#e2e2e2;">Differential Pair</span>
<span class="t" id="t58" style="left:144.8px;top:130.4px;font-size:14.3px;letter-spacing:-0.096px;color:#e8e8e8;">None</span>
<div style="left:457.6px;top:8.7px;width:26.2px;height:26.2px;background:#474747;border:1px solid #2c2c2c;border-radius:4px;">
<div style="left:3px;top:3px;width:18.2px;height:18.2px;background:#1c1c1c;"></div>
</div>
</div>
<svg class="i" style="left:11.5px;top:338.5px;" width="5" height="9" viewBox="0 0 5 9"><path d="M0.5 0 L5 4.5 L0.5 9 Z" fill="#e8e8e8"/></svg>
<span class="t" id="t59" style="left:19.8px;top:336.76px;font-size:14.1px;letter-spacing:0.206px;color:#f4f4f4;font-weight:bold;">Parameters (Net)</span>
<svg class="i" style="left:10.5px;top:376px;" width="6" height="6" viewBox="0 0 6 6"><path d="M6 0 V6 H0 Z" fill="#e8e8e8"/></svg>
<span class="t" id="t60" style="left:20.3px;top:373.56px;font-size:14.1px;letter-spacing:-0.208px;color:#f4f4f4;font-weight:bold;">Vertices</span>
<div style="left:10px;top:396.4px;width:492px;height:176.8px;background:#474747;border-radius:4px;">
<span class="t" id="t61" style="left:5.3px;top:13.8px;font-size:14.3px;letter-spacing:0.213px;color:#e2e2e2;">Width</span>
<div style="left:58px;top:6px;width:395px;height:28.4px;background:linear-gradient(#686868,#555);border:1px solid #2a2a2a;border-radius:4px;">
<span class="t" id="t62" style="left:6.8px;top:7.3px;font-size:13.7px;letter-spacing:-0.334px;color:#f0f0f0;">Small</span>
<svg class="i" style="left:375px;top:11.1px;" width="11" height="6" viewBox="0 0 11 6"><path d="M0 0 H11 L5.5 5.8 Z" fill="#f4f4f4"/></svg>
</div>
<div style="left:458.6px;top:7.4px;width:26.2px;height:26.4px;background:#474747;border:1px solid #2c2c2c;border-radius:4px;">
<div style="left:3px;top:3px;width:18.2px;height:18.4px;background:#000086;"></div>
</div>
<div style="left:6px;top:49.6px;width:479px;height:121px;background:#474747;border:1px solid #2b2b2b;">
<div style="left:0px;top:25px;width:477px;height:51px;background:#3a3a3a;"></div>
<div style="left:0px;top:24px;width:477px;height:1.4px;background:#2b2b2b;"></div>
<div style="left:0px;top:50px;width:477px;height:1px;background:#333;"></div>
<div style="left:0px;top:75.4px;width:477px;height:1.2px;background:#2b2b2b;"></div>
<div style="left:74.3px;top:4.5px;width:1.2px;height:15px;background:#2e2e2e;"></div>
<div style="left:74.3px;top:25px;width:1px;height:51px;background:#404040;"></div>
<div style="left:275.2px;top:4.5px;width:1.2px;height:15px;background:#2e2e2e;"></div>
<div style="left:275.2px;top:25px;width:1px;height:51px;background:#404040;"></div>
<div style="left:476.2px;top:4.5px;width:1.2px;height:15px;background:#2e2e2e;"></div>
<span class="t" id="t63" style="left:6.8px;top:6.7px;font-size:13.7px;letter-spacing:0.104px;color:#e2e2e2;">Index</span>
<span class="t" id="t64" style="left:81.3px;top:6.7px;font-size:13.7px;color:#e2e2e2;">X</span>
<span class="t" id="t65" style="left:282.3px;top:6.7px;font-size:13.7px;color:#e2e2e2;">Y</span>
<span class="t" id="t66" style="left:7.3px;top:31.4px;font-size:14.3px;color:#e8e8e8;">1</span>
<span class="t" id="t67" style="left:81.3px;top:31.4px;font-size:14.3px;letter-spacing:0.220px;color:#e8e8e8;">6400mil</span>
<span class="t" id="t68" style="left:282.3px;top:31.4px;font-size:14.3px;letter-spacing:0.220px;color:#e8e8e8;">9750mil</span>
<span class="t" id="t69" style="left:7.3px;top:56.4px;font-size:14.3px;color:#e8e8e8;">2</span>
<span class="t" id="t70" style="left:81.3px;top:56.4px;font-size:14.3px;letter-spacing:0.220px;color:#e8e8e8;">6650mil</span>
<span class="t" id="t71" style="left:282.3px;top:56.4px;font-size:14.3px;letter-spacing:0.220px;color:#e8e8e8;">9750mil</span>
<div style="left:335.3px;top:83.3px;width:92.7px;height:30.3px;border:1px solid #383838;border-radius:4px;background:#484848;">
<span class="t" id="t72" style="left:32px;top:7.5px;font-size:14.3px;letter-spacing:0.473px;color:#7e7e7e;">Add</span>
</div>
<div style="left:433.5px;top:83.3px;width:38.2px;height:30.3px;border:1px solid #383838;border-radius:4px;background:#484848;">
<svg class="i" style="left:12.5px;top:5.7px;" width="11" height="15" viewBox="0 0 11 15"><path d="M0.5 3.3 H10.5 M4 3 V1.2 H7 V3" stroke="#7a7a7a" stroke-width="1.5" fill="none"/><path d="M1.5 5 H9.5 V14 H1.5 Z" fill="#7a7a7a"/><path d="M4 6.5V12.5M7 6.5V12.5" stroke="#484848" stroke-width="1"/></svg>
</div>
</div>
</div>
<span class="t" id="t73" style="left:4.8px;top:882.1px;font-size:13.7px;letter-spacing:-0.080px;color:#e2e2e2;">1 object is selected</span>
</div>
<div class="panel-tabs" style="left:1403px;top:959px;width:514px;height:28px;background:#333;">
<div style="left:0.7px;top:0.6px;width:95.6px;height:25.8px;background:#363636;border:1px solid #2a2a2a;border-top:none;border-radius:0 0 4px 4px;"></div>
<div style="left:96.6px;top:0px;width:78.6px;height:26.4px;background:#4d4d4d;border-radius:0 0 4px 4px;"></div>
<div style="left:175.6px;top:0.6px;width:68px;height:25.8px;background:#363636;border:1px solid #2a2a2a;border-top:none;border-radius:0 0 4px 4px;"></div>
<span class="t" id="t74" style="left:8.3px;top:7.7px;font-size:13.7px;letter-spacing:0.310px;color:#e6e6e6;">Components</span>
<span class="t" id="t75" style="left:104.3px;top:7.7px;font-size:13.7px;letter-spacing:0.168px;color:#f0f0f0;">Properties</span>
<span class="t" id="t76" style="left:183.3px;top:7.7px;font-size:13.7px;letter-spacing:-0.231px;color:#e6e6e6;">SCH List</span>
</div>
<div class="statusbar" style="left:0px;top:990px;width:1920px;height:28px;background:#3f3f3f;">
<span class="t" id="t77" style="left:5.3px;top:8.5px;font-size:13.7px;letter-spacing:0.099px;color:#e2e2e2;">X:6450.000mil Y:9750.000mil</span>
<span class="t" id="t78" style="left:201.3px;top:8.5px;font-size:13.7px;letter-spacing:0.225px;color:#e2e2e2;">Grid:50mil</span>
<div style="left:486px;top:5px;width:1px;height:23px;background:#2c2c2c;"></div>
<div style="left:1865.3px;top:5px;width:50.2px;height:24px;background:#4c4c4c;border:1px solid #2a2a2a;border-radius:4px 4px 0 0;">
<span class="t" id="t79" style="left:4px;top:4.1px;font-size:13.7px;letter-spacing:-0.292px;color:#eeeeee;">Panels</span>
</div>
</div>
<svg class="i" style="left:0px;top:0px;pointer-events:none;" width="1920" height="1018" viewBox="0 0 1920 1018"><rect x="591.6" y="426.4" width="578.8" height="113.6" rx="2.5" fill="none" stroke="#ff2416" stroke-width="3"/><rect x="1441.5" y="229.6" width="192.9" height="49.75" rx="3.2" fill="none" stroke="#ff2416" stroke-width="3.3"/><path d="M1188.7 459.6 L1423.9 273.6 L1419.5 271.3 L1438.4 269.5 L1430.4 286.3 L1430.1 280.7 L1189.4 460.5 Z" fill="#ff2416"/></svg>
</div>
</body>
</html>
